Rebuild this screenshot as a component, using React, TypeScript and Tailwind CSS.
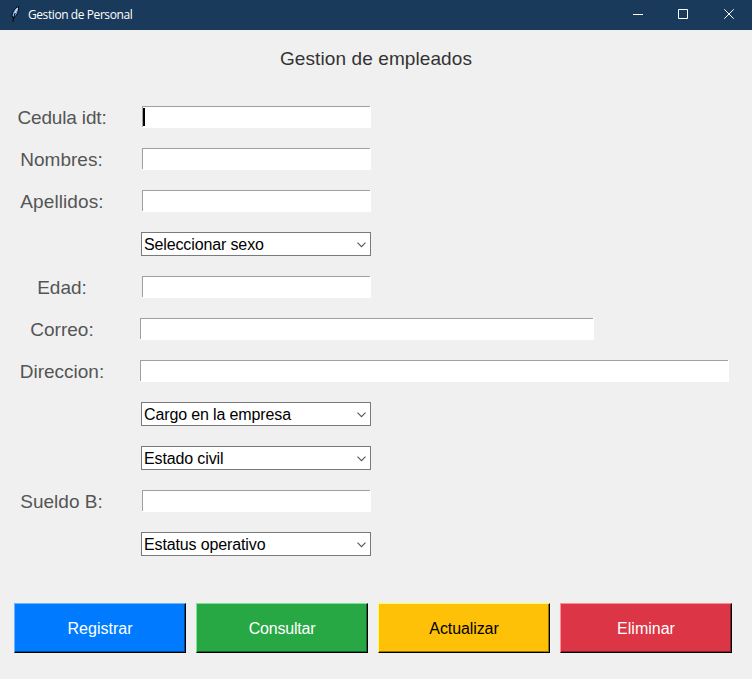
import React from "react";

const labelClass = "w-[124px] shrink-0 pt-px text-center text-[19px] leading-[22px] whitespace-nowrap text-[#555555] ";

function Entry({ label, className, labelStyle = "", focused }: { label: string; className: string; labelStyle?: string; focused?: boolean }) {
  return (
    <div className="flex h-[22px]">
      <div className={labelClass + labelStyle}>{label}</div>
      <div className={"flex h-[22px] bg-white pt-px pl-px " + className}>
        <div className="flex h-full w-full flex-col">
          <div className="-mt-px -ml-px mr-px h-px shrink-0 bg-[#a0a0a0]" />
          <div className="-ml-px h-5 border-l border-[#a0a0a0] pt-px">
            {focused && <div className="h-[18px] w-0.5 bg-black" />}
          </div>
        </div>
      </div>
    </div>
  );
}

function Combo({ text }: { text: string }) {
  return (
    <div className="ml-[141px] flex h-6 w-[230px] items-center justify-between border border-[#7a7a7a] bg-white pr-1 pl-[2px] text-base leading-[22px] text-black">
      <span className="pt-[2px] tracking-[-0.13px] whitespace-nowrap">{text}</span>
      <svg className="mt-px" width="9" height="6" viewBox="0 0 9 6" fill="none" stroke="#555" strokeWidth="1.1">
        <path d="M.5 .7 4.5 4.7 8.5 .7" />
      </svg>
    </div>
  );
}

function ActionButton({ text, outer, inner }: { text: string; outer: string; inner: string }) {
  return (
    <button className={"flex h-[50px] w-[172px] border-t border-r border-b border-l border-r-black border-b-black " + outer}>
      <span className={"flex h-full w-full items-center justify-center border-r border-b pt-[2px] pl-px text-base " + inner}>{text}</span>
    </button>
  );
}

export default function App() {
  return (
    <div className="flex h-[679px] w-[752px] flex-col overflow-hidden bg-[#f0f0f0] font-['Liberation_Sans',Arial,sans-serif]">
      <header className="flex h-[30px] shrink-0 items-center bg-[#1a3a5c] text-white">
        <svg className="mb-[3px] ml-[10px]" width="10" height="16" viewBox="0 0 10 16">
          <path d="M8.5 .5C5.5 1.5 2.5 5 2 9.5L3 12C6.5 10.5 9 6 8.5 .5Z" fill="#6ea4e4" stroke="#000" strokeWidth="1" />
          <path d="M7.6 2 3.5 9.5" stroke="#dcebff" strokeWidth="1" />
          <path d="M5 7 2.8 15.5" stroke="#000" strokeWidth="1" />
        </svg>
        <span className="ml-2 font-['Open_Sans','Noto_Sans',sans-serif] text-[12px] leading-4 tracking-[-0.42px] whitespace-nowrap">Gestion de Personal</span>
        <svg className="ml-auto" width="130" height="30" viewBox="0 0 130 30" fill="none" stroke="#fff">
          <path d="M11 14.5h10M56.5 9.5h9v9h-9zM102.3 9.3l9.4 9.4M111.7 9.3l-9.4 9.4" />
        </svg>
      </header>
      <h1 className="mt-[18px] h-[22px] text-center text-[19px] leading-[22px] tracking-[0.1px] text-[#333333]">Gestion de empleados</h1>
      <main className="mt-[36px] flex flex-col gap-5">
        <Entry label="Cedula idt:" className="ml-[18px] w-[229px]" labelStyle="tracking-[-0.15px]" focused />
        <Entry label="Nombres:" className="ml-[18px] w-[229px]" labelStyle="pr-px" />
        <Entry label="Apellidos:" className="ml-[18px] w-[229px]" labelStyle="tracking-[0.1px]" />
        <Combo text="Seleccionar sexo" />
        <Entry label="Edad:" className="ml-[18px] w-[229px]" />
        <Entry label="Correo:" className="ml-[16px] w-[454px]" />
        <Entry label="Direccion:" className="ml-[16px] w-[589px]" />
        <Combo text="Cargo en la empresa" />
        <Combo text="Estado civil" />
        <Entry label="Sueldo B:" className="ml-[18px] w-[229px]" labelStyle="pr-px" />
        <Combo text="Estatus operativo" />
      </main>
      <footer className="mt-[47px] ml-[14px] flex gap-[10px]">
        <ActionButton text="Registrar" outer="border-t-[#6cb4ff] border-l-[#6cb4ff]" inner="border-[#004a99] bg-[#007bff] text-white" />
        <ActionButton text="Consultar" outer="border-t-[#7be494] border-l-[#7be494]" inner="border-[#186429] bg-[#28a745] tracking-[-0.2px] text-white" />
        <ActionButton text="Actualizar" outer="border-t-[#ffff5a] border-l-[#ffff5a]" inner="border-[#997404] bg-[#ffc107] tracking-[-0.1px] text-black" />
        <ActionButton text="Eliminar" outer="border-t-[#ff8c99] border-l-[#ff8c99]" inner="border-[#842029] bg-[#dc3545] text-white" />
      </footer>
    </div>
  );
}
